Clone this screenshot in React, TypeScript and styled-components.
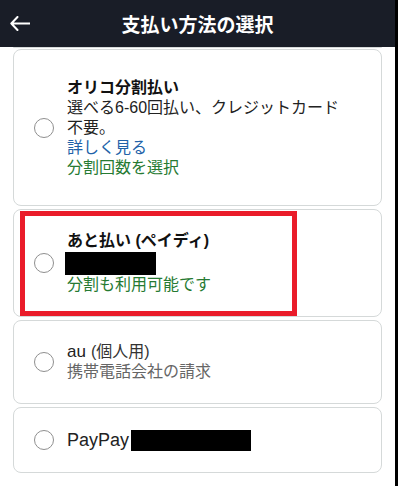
import React from 'react'
import styled, { createGlobalStyle } from 'styled-components'

const GlobalStyle = createGlobalStyle`
  html, body {
    margin: 0;
    padding: 0;
    background: #000;
  }
  body {
    font-family: "Liberation Sans", "Noto Sans CJK JP", sans-serif;
    -webkit-font-smoothing: antialiased;
  }
`

const Screen = styled.div`
  width: 395px;
  height: 486px;
  background: #fff;
  display: flex;
  flex-direction: column;
  overflow: hidden;
`

const Header = styled.header`
  height: 47px;
  flex-shrink: 0;
  background: #191d27;
  display: grid;
  grid-template-columns: 1fr auto 1fr;
  align-items: center;
  color: #fff;
`

const BackButton = styled.div`
  padding-left: 10px;
  display: flex;
  align-items: center;
`

const HeaderTitle = styled.h1`
  margin: 0;
  font-size: 19px;
  font-weight: 700;
  font-family: "Noto Sans CJK JP", sans-serif;
`

const List = styled.div`
  display: flex;
  flex-direction: column;
  gap: 3px;
  padding: 0 13px;
`

const CardTail = styled.div`
  height: 0;
  border-bottom: 1px solid #d5d9d9;
  border-radius: 0 0 8px 8px;
  margin-bottom: -1px;
`

const Card = styled.div<{ $height: number; $space?: number }>`
  position: relative;
  box-sizing: border-box;
  height: ${(p) => p.$height}px;
  flex-shrink: 0;
  border: 1px solid #d5d9d9;
  border-radius: 8px;
  display: flex;
  align-items: center;
  padding: 0 16px 0 20px;
  margin-top: ${(p) => p.$space ?? 0}px;
`

const Radio = styled.span`
  width: 20px;
  height: 20px;
  box-sizing: border-box;
  border: 1px solid #8f8f8f;
  border-radius: 50%;
  flex-shrink: 0;
  margin-right: 13px;
  background: #fff;
`

const Body = styled.div`
  display: flex;
  flex-direction: column;
  width: 280px;
`

const Line = styled.div<{ $tone?: 'title' | 'text' | 'muted' | 'link' | 'green'; $size?: number }>`
  font-size: ${(p) => p.$size ?? 16}px;
  line-height: 20px;
  font-weight: ${(p) => (p.$tone === 'title' ? 700 : 400)};
  color: ${(p) =>
    ({
      title: '#111',
      text: '#222',
      muted: '#666',
      link: '#2162a8',
      green: '#267a32',
    })[p.$tone ?? 'text']};
  display: flex;
  flex-wrap: wrap;
  align-items: center;
`

const Aside = styled.span`
  font-size: 16px;
  color: #333;
  margin-left: 5px;
`

const Redacted = styled.span<{ $w: number; $h: number; $shift?: number }>`
  display: inline-block;
  width: ${(p) => p.$w}px;
  height: ${(p) => p.$h}px;
  background: #000;
  margin-left: ${(p) => p.$shift ?? 0}px;
`

const RedactedRow = styled.div`
  height: 24px;
  display: flex;
  align-items: center;
`

const Highlight = styled.div`
  position: absolute;
  left: 6px;
  top: 1px;
  width: 277px;
  height: 105px;
  box-sizing: border-box;
  border: 5px solid #ea1c2a;
  pointer-events: none;
`

const BackArrow = () => (
  <svg width="20" height="15" viewBox="0 0 20 15" fill="none">
    <path
      d="M7.5 1 L1.3 7.5 L7.5 14 M1.3 7.5 H19.5"
      stroke="#fff"
      strokeWidth="2"
      strokeLinecap="round"
      strokeLinejoin="round"
    />
  </svg>
)

const App = () => (
  <>
    <GlobalStyle />
    <Screen>
      <Header>
        <BackButton>
          <BackArrow />
        </BackButton>
        <HeaderTitle>支払い方法の選択</HeaderTitle>
        <div />
      </Header>
      <List>
        <CardTail />
        <Card $height={157} $space={-1}>
          <Radio />
          <Body>
            <Line $tone="title">オリコ分割払い</Line>
            <Line>選べる6-60回払い、クレジットカード不要。</Line>
            <Line $tone="link">詳しく見る</Line>
            <Line $tone="green">分割回数を選択</Line>
          </Body>
        </Card>
        <Card $height={108}>
          <Radio />
          <Body>
            <Line $tone="title">あと払い (ペイディ)</Line>
            <RedactedRow>
              <Redacted $w={91} $h={23} $shift={-2} />
            </RedactedRow>
            <Line $tone="green">分割も利用可能です</Line>
          </Body>
          <Highlight />
        </Card>
        <Card $height={84}>
          <Radio />
          <Body>
            <Line $size={17}>
              au<Aside>(個人用)</Aside>
            </Line>
            <Line $tone="muted">携帯電話会社の請求</Line>
          </Body>
        </Card>
        <Card $height={66}>
          <Radio />
          <Body>
            <Line $size={18}>
              PayPay
              <Redacted $w={120} $h={21} $shift={2} />
            </Line>
          </Body>
        </Card>
        <Card $height={40} $space={10} />
      </List>
    </Screen>
  </>
)

export default App
